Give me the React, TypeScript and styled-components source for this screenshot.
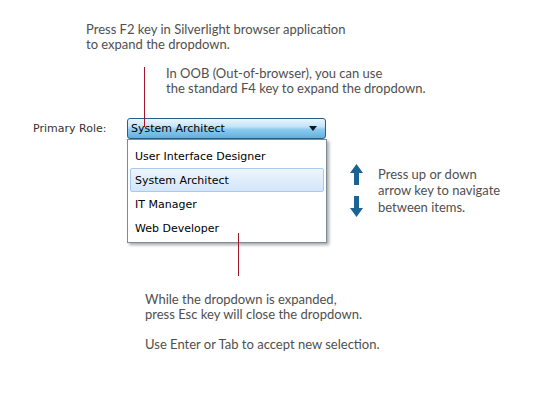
import React from "react";
import styled, { createGlobalStyle } from "styled-components";

const GlobalStyle = createGlobalStyle`
  html, body {
    margin: 0;
    padding: 0;
    background: #ffffff;
  }
`;

const roles = ["User Interface Designer", "System Architect", "IT Manager", "Web Developer"];
const selected = "System Architect";

const ArrowIcon = ({ down }: { down?: boolean }) => (
  <svg width="13" height="21" viewBox="0 0 13 21" style={down ? { transform: "rotate(180deg)" } : undefined}>
    <path d="M6.5 0 L13 9 L9 9 L9 21 L4 21 L4 9 L0 9 Z" fill="#1b6394" />
  </svg>
);

const CaretIcon = () => (
  <svg width="8" height="5" viewBox="0 0 8 5">
    <path d="M0 0 L8 0 L4 5 Z" fill="#0c1a26" />
  </svg>
);

export default function App() {
  return (
    <Page>
      <GlobalStyle />
      <Note $indent={86} $top={22}>
        Press F2 key in Silverlight browser application
        <br />
        to expand the dropdown.
      </Note>
      <Note $indent={166} $top={14}>
        In OOB (Out-of-browser), you can use
        <br />
        the standard F4 key to expand the dropdown.
      </Note>
      <Form>
        <Label>Primary Role:</Label>
        <Combo>
          <Leader $left={16} $top={-52} $height={60} />
          <ComboText>{selected}</ComboText>
          <CaretIcon />
        </Combo>
        <span />
        <span />
        <List>
          {roles.map((r) => (
            <Item key={r} $active={r === selected}>
              {r}
            </Item>
          ))}
          <Leader $left={110} $top={93} $height={43} />
        </List>
        <SideNote>
          <Arrows>
            <ArrowIcon />
            <ArrowIcon down />
          </Arrows>
          <SideText>
            Press up or down
            <br />
            arrow key to navigate
            <br />
            between items.
          </SideText>
        </SideNote>
      </Form>
      <Note $indent={145} $top={49}>
        While the dropdown is expanded,
        <br />
        press Esc key will close the dropdown.
        <br />
        <br />
        Use Enter or Tab to accept new selection.
      </Note>
    </Page>
  );
}

const Page = styled.div`
  width: 545px;
  height: 399px;
  display: flex;
  flex-direction: column;
  overflow: hidden;
  font-family: Lato, "Open Sans", sans-serif;
`;

const Note = styled.p<{ $indent: number; $top: number }>`
  margin: ${(p) => p.$top}px 0 0 ${(p) => p.$indent}px;
  font-size: 13px;
  line-height: 15px;
  color: #4f4f4f;
`;

const Form = styled.div`
  margin-top: 22px;
  padding-left: 33px;
  display: grid;
  grid-template-columns: 94px 199px auto;
  grid-template-rows: 21px auto;
`;

const Label = styled.span`
  font-family: "DejaVu Sans", Verdana, sans-serif;
  font-size: 11px;
  color: #333333;
  align-self: center;
`;

const Combo = styled.div`
  position: relative;
  display: flex;
  align-items: center;
  justify-content: space-between;
  box-sizing: border-box;
  height: 21px;
  padding: 0 8px 0 3px;
  border: 1px solid #2b5e84;
  border-radius: 3px;
  background: linear-gradient(to bottom, #eaf6fc 0%, #c4e4f6 40%, #8ccaee 55%, #62b0e0 100%);
`;

const ComboText = styled.span`
  font-family: "DejaVu Sans", Verdana, sans-serif;
  font-size: 11px;
  color: #000000;
`;

const Leader = styled.div<{ $left: number; $top: number; $height: number }>`
  position: absolute;
  left: ${(p) => p.$left}px;
  top: ${(p) => p.$top}px;
  width: 1px;
  height: ${(p) => p.$height}px;
  background: #a3162b;
`;

const List = styled.div`
  position: relative;
  box-sizing: border-box;
  width: 200px;
  padding: 4px 2px 2px;
  border: 1px solid #7d8c99;
  background: #ffffff;
  box-shadow: 2px 2px 3px rgba(0, 0, 0, 0.35);
  display: flex;
  flex-direction: column;
`;

const Item = styled.div<{ $active: boolean }>`
  box-sizing: border-box;
  height: 24px;
  display: flex;
  align-items: center;
  padding-left: 4px;
  font-family: "DejaVu Sans", Verdana, sans-serif;
  font-size: 11px;
  color: #000000;
  border: 1px solid ${(p) => (p.$active ? "#a6cbed" : "transparent")};
  border-radius: 2px;
  background: ${(p) => (p.$active ? "linear-gradient(to bottom, #eef5fd, #d3e6f9)" : "transparent")};
`;

const SideNote = styled.div`
  display: flex;
  align-items: center;
  gap: 15px;
  margin: 25px 0 0 24px;
  align-self: start;
`;

const Arrows = styled.div`
  display: flex;
  flex-direction: column;
  gap: 11px;
`;

const SideText = styled.p`
  margin: 0;
  font-size: 13px;
  line-height: 16.5px;
  color: #4f4f4f;
`;
